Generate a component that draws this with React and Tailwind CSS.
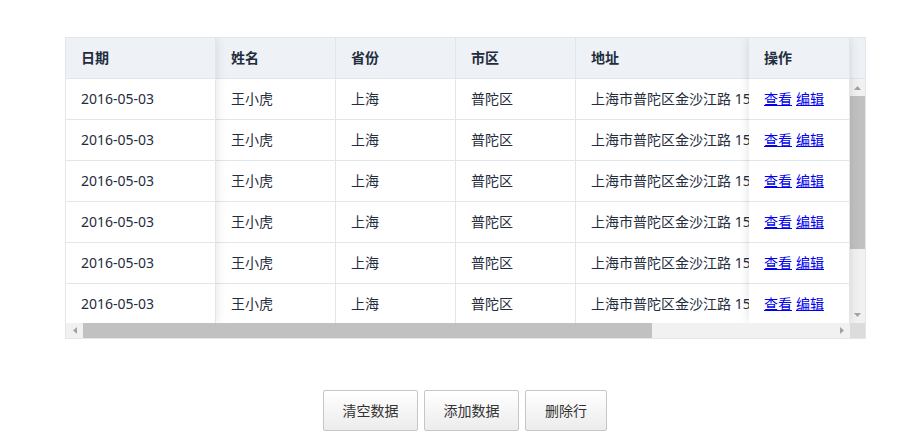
import React from 'react';

const rows = Array.from({ length: 6 }, () => ({
  date: '2016-05-03',
  name: '王小虎',
  province: '上海',
  city: '普陀区',
  address: '上海市普陀区金沙江路 1518 弄',
}));

const font = { fontFamily: '"Noto Sans", "Noto Sans CJK SC", sans-serif' };

function Tri({ dir }) {
  const pts = {
    up: '0,4 3.5,0 7,4',
    down: '0,0 3.5,4 7,0',
    left: '4,0 0,3.5 4,7',
    right: '0,0 4,3.5 0,7',
  }[dir];
  const w = dir === 'up' || dir === 'down' ? 7 : 4;
  const h = dir === 'up' || dir === 'down' ? 4 : 7;
  return (
    <svg width={w} height={h} viewBox={`0 0 ${w} ${h}`}>
      <polygon points={pts} fill="#a3a3a3" />
    </svg>
  );
}

function HeadCell({ w, children }) {
  return (
    <div
      className="h-[41px] shrink-0 border-b border-r border-[#dfe6ec] bg-[#eef1f6] pl-[15px] pb-[1px] flex items-center text-[14px] font-bold text-[#1f2d3d] whitespace-nowrap"
      style={{ width: w }}
    >
      {children}
    </div>
  );
}

function Cell({ w, children }) {
  return (
    <div
      className="h-[41px] shrink-0 border-b border-r border-[#dfe6ec] bg-white pl-[15px] pb-[1px] flex items-center text-[14px] text-[#1f2d3d] whitespace-nowrap overflow-hidden"
      style={{ width: w }}
    >
      {children}
    </div>
  );
}

export default function App() {
  return (
    <div className="bg-white w-[903px] h-[446px] overflow-hidden pt-[37px]" style={font}>
      <div className="ml-[65px] w-[801px] h-[302px] border border-[#dfe6ec] flex flex-col">
        <div className="h-[285px] flex overflow-hidden">
          {/* fixed left */}
          <div className="w-[150px] shrink-0 flex flex-col relative z-10 shadow-[0_0_10px_rgba(0,0,0,0.12)]">
            <HeadCell w={150}>日期</HeadCell>
            {rows.map((r, i) => (
              <Cell key={i} w={150}>{r.date}</Cell>
            ))}
          </div>
          {/* scrolling middle */}
          <div className="w-[533px] shrink-0 overflow-hidden">
            <div className="flex">
              <HeadCell w={120}>姓名</HeadCell>
              <HeadCell w={120}>省份</HeadCell>
              <HeadCell w={120}>市区</HeadCell>
              <HeadCell w={300}>地址</HeadCell>
            </div>
            {rows.map((r, i) => (
              <div key={i} className="flex">
                <Cell w={120}>{r.name}</Cell>
                <Cell w={120}>{r.province}</Cell>
                <Cell w={120}>{r.city}</Cell>
                <Cell w={300}>{r.address}</Cell>
              </div>
            ))}
          </div>
          {/* fixed right */}
          <div className="w-[101px] shrink-0 flex flex-col relative z-10 shadow-[0_0_10px_rgba(0,0,0,0.12)]">
            <HeadCell w={101}>操作</HeadCell>
            {rows.map((r, i) => (
              <Cell key={i} w={101}>
                <a className="text-[#0000ee] underline cursor-pointer">查看</a>
                <a className="ml-[4px] text-[#0000ee] underline cursor-pointer">编辑</a>
              </Cell>
            ))}
          </div>
          {/* vertical scrollbar */}
          <div className="w-[15px] shrink-0 flex flex-col">
            <div className="h-[41px] bg-[#eef1f6] border-b border-[#dfe6ec]" />
            <div className="flex-1 bg-[#f1f1f1] flex flex-col items-center">
              <div className="h-[17px] flex items-center justify-center">
                <Tri dir="up" />
              </div>
              <div className="w-[15px] h-[153px] bg-[#c1c1c1]" />
              <div className="flex-1" />
              <div className="h-[17px] flex items-center justify-center">
                <Tri dir="down" />
              </div>
            </div>
          </div>
        </div>
        {/* horizontal scrollbar */}
        <div className="h-[15px] flex bg-[#f1f1f1]">
          <div className="w-[784px] flex items-center">
            <div className="w-[17px] flex items-center justify-center">
              <Tri dir="left" />
            </div>
            <div className="w-[569px] h-[15px] bg-[#c1c1c1]" />
            <div className="flex-1" />
            <div className="w-[17px] flex items-center justify-center">
              <Tri dir="right" />
            </div>
          </div>
          <div className="w-[15px] bg-[#dcdcdc]" />
        </div>
      </div>

      <div className="ml-[323px] mt-[51px] flex gap-[6px]">
        {['清空数据', '添加数据', '删除行'].map((t) => (
          <button
            key={t}
            className={`h-[41px] ${t === '删除行' ? 'w-[82px]' : 'w-[95px]'} border border-[#c6c6c6] rounded-[2px] bg-gradient-to-b from-white to-[#ececec] text-[14px] text-[#333]`}
          >
            {t}
          </button>
        ))}
      </div>
    </div>
  );
}
